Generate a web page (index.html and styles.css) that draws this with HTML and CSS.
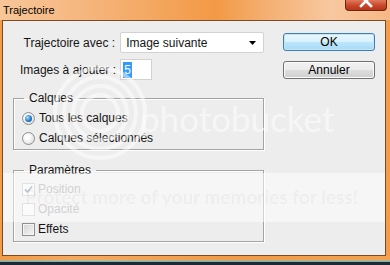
FILE: index.html
```html
<!DOCTYPE html>
<html lang="fr">
  <head>
    <meta charset="utf-8">
    <title>Trajectoire</title>
    <meta name="viewport" content="width=device-width, initial-scale=1">
    <link rel="stylesheet" href="styles.css">
  </head>
  <body>
    <div class="window">
      <!-- title bar -->
      <div class="titlebar">
        <span class="title">Trajectoire</span>
        <span class="close" title="Fermer">
          <svg width="42" height="11" viewBox="0 0 42 11">
            <path d="M16 -3 L26 7 M26 -3 L16 7" stroke="#fff" stroke-width="2.6" stroke-linecap="square"/>
          </svg>
        </span>
      </div>

      <div class="client">
        <div class="main">
          <div class="row first">
            <label class="lbl">Trajectoire avec :</label>
            <div class="combo">
              <span>Image suivante</span>
              <svg width="7" height="4" viewBox="0 0 7 4"><path d="M0 0 H7 L3.5 4 Z" fill="#000"/></svg>
            </div>
          </div>
          <div class="row">
            <label class="lbl">Images à ajouter :</label>
            <div class="field"><span class="sel">5</span></div>
          </div>

          <fieldset class="group calques">
            <legend>Calques</legend>
            <div class="opt"><span class="radio on"></span>Tous les calques</div>
            <div class="opt"><span class="radio"></span>Calques sélectionnés</div>
          </fieldset>

          <fieldset class="group params">
            <legend>Paramètres</legend>
            <div class="opt off">
              <span class="check">
                <svg width="11" height="11" viewBox="0 0 11 11"><path d="M2 5.5 L4.5 8 L9 2.5" stroke="#7f8fb0" stroke-width="1.8" fill="none"/></svg>
              </span>Position
            </div>
            <div class="opt off"><span class="check"></span>Opacité</div>
            <div class="opt"><span class="check live"></span>Effets</div>
          </fieldset>
        </div>

        <div class="side">
          <button type="button" class="btn default">OK</button>
          <button type="button" class="btn">Annuler</button>
        </div>

        <!-- hosting watermark laid over the dialog -->
        <div class="wm-band"></div>
        <svg class="wm-logo" width="96" height="96" viewBox="0 0 96 96">
          <g fill="none" stroke="#fff" stroke-opacity="0.5" stroke-width="4">
            <circle cx="48" cy="48" r="45"/>
            <circle cx="48" cy="48" r="36"/>
            <circle cx="48" cy="48" r="27"/>
            <circle cx="48" cy="48" r="18"/>
          </g>
        </svg>
        <div class="wm-name">photobucket</div>
        <div class="wm-slogan">Protect more of your memories for less!</div>
      </div>

      <div class="bottom"></div>
      <div class="taskbar"></div>
    </div>
  </body>
</html>
```

FILE: styles.css
```css
body {
  margin: 0;
  font-family: "Liberation Sans", Arial, sans-serif;
  font-size: 12px;
  color: #151515;
}

.window {
  width: 390px;
  height: 265px;
  overflow: hidden;
  background: #f29d4c;
}

.titlebar {
  height: 20px;
  display: flex;
  justify-content: space-between;
  background: linear-gradient(90deg, #f8c698 0%, #f6b781 20%, #f4a55c 42%, #f29945 55%, #f5b277 70%, #f8c8a0 85%, #f6b884 100%);
}
.title {
  font-size: 11px;
  padding: 4px 0 0 3px;
  color: #000;
}
.close {
  width: 42px;
  height: 11px;
  margin-right: 3px;
  box-sizing: border-box;
  border: 1px solid #6e2613;
  border-top: 0;
  border-radius: 0 0 4px 4px;
  background: linear-gradient(#e0795e, #c9472a 55%, #b5361c);
  overflow: hidden;
}
.close svg {
  display: block;
  margin: -1px 0 0 -1px;
}

.client {
  position: relative;
  display: flex;
  height: 236px;
  margin: 0 4px 0 2px;
  box-sizing: border-box;
  border: 1px solid #7b4a22;
  background: #ededed;
}

.main {
  width: 251px;
  padding-left: 10px;
}
.row {
  display: flex;
  align-items: center;
  height: 21px;
  margin-top: 6px;
}
.row.first {
  margin-top: 11px;
}
.lbl {
  width: 103px;
  text-align: right;
  margin-right: 5px;
}
.combo {
  width: 145px;
  height: 21px;
  box-sizing: border-box;
  border: 1px solid #d2d2d2;
  border-radius: 2px;
  background: #fff;
  display: flex;
  align-items: center;
  justify-content: space-between;
  padding: 0 7px 0 5px;
}
.combo svg {
  display: block;
}
.field {
  width: 32px;
  height: 21px;
  margin-left: -1px;
  box-sizing: border-box;
  border: 1px solid #d2d2d2;
  background: #fff;
  padding: 2px 0 0 2px;
}
.sel {
  display: inline-block;
  width: 9px;
  height: 16px;
  line-height: 16px;
  background: #3399ff;
  color: #fff;
  text-align: center;
}

.group {
  margin: 11px 0 0;
  padding: 3px 0 1px 8px;
  border: 1px solid #a3a3a3;
  box-shadow: inset 1px 1px 0 #fff, 1px 1px 0 #fff;
  min-width: 0;
}
.group legend {
  margin-left: 2px;
  padding: 0 5px;
  line-height: 14px;
}
.params {
  margin-top: 13px;
  padding-top: 2px;
  padding-bottom: 2px;
}
.opt {
  display: flex;
  align-items: center;
  height: 20px;
}
.opt.off {
  color: #a2a2a2;
}

.radio {
  position: relative;
  width: 13px;
  height: 13px;
  margin-right: 4px;
  box-sizing: border-box;
  border: 1px solid #8e8f8f;
  border-radius: 50%;
  background: radial-gradient(circle at 40% 40%, #fff 20%, #d8d8d8 90%);
}
.radio.on::after {
  content: "";
  position: absolute;
  left: 2px;
  top: 2px;
  width: 7px;
  height: 7px;
  border-radius: 50%;
  background: radial-gradient(circle at 35% 35%, #a6e0ff 0%, #2a7ccc 55%, #0e3f7c 100%);
}

.check {
  width: 13px;
  height: 13px;
  margin-right: 3px;
  box-sizing: border-box;
  border: 1px solid #c4c4c4;
  background: #f6f6f6;
}
.check svg {
  display: block;
}
.check.live {
  border-color: #8f8f8f;
  background: linear-gradient(135deg, #d2d2d2, #f7f7f7);
  box-shadow: inset 0 0 0 1px #f4f4f4;
}

.side {
  display: flex;
  flex-direction: column;
  margin-left: 19px;
}
.btn {
  width: 92px;
  height: 18px;
  margin-top: 12px;
  padding: 0;
  font: inherit;
  color: #000;
  border: 1px solid #707070;
  border-radius: 3px;
  background: linear-gradient(#f2f2f2 0%, #ebebeb 50%, #dddddd 51%, #cfcfcf 100%);
  box-shadow: inset 0 0 0 1px #fbfbfb;
}
.btn + .btn {
  margin-top: 10px;
}
.btn.default {
  border-color: #3c7fb1;
  background: linear-gradient(#eaf6fd 0%, #d9f0fc 50%, #bee6fd 51%, #a7d9f5 100%);
  box-shadow: inset 0 0 0 1px #c4e5f6;
}

.wm-band {
  position: absolute;
  left: 0;
  right: 0;
  top: 152px;
  height: 49px;
  background: rgba(255, 255, 255, 0.5);
}
.wm-logo {
  position: absolute;
  left: 49px;
  top: 44px;
}
.wm-name {
  position: absolute;
  left: 137px;
  top: 80px;
  font-family: Lato, sans-serif;
  font-size: 35px;
  line-height: 35px;
  color: rgba(255, 255, 255, 0.55);
}
.wm-slogan {
  position: absolute;
  left: 22px;
  top: 166px;
  font-family: Lato, sans-serif;
  font-weight: bold;
  font-size: 19px;
  line-height: 19px;
  color: rgba(0, 0, 0, 0.05);
  white-space: nowrap;
}

.bottom {
  height: 5px;
  background: linear-gradient(90deg, #f29a45, #f6a95e 20%, #f29a45 60%, #f4a24f);
}
.taskbar {
  height: 4px;
  border-top: 1px solid #3ec3f0;
  background: #1c2a36;
}
```
